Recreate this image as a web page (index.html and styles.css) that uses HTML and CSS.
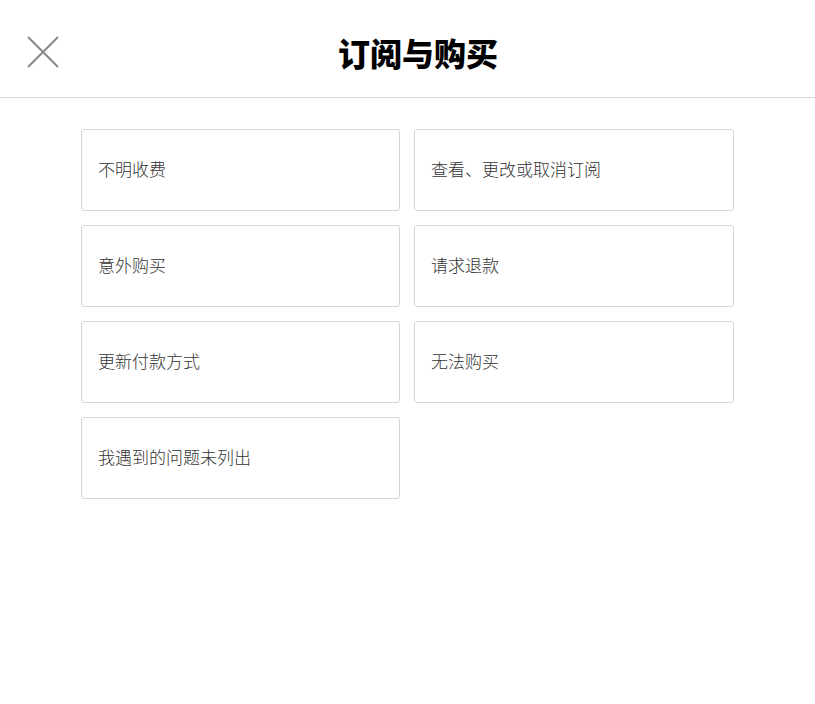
FILE: index.html
```html
<!DOCTYPE html>
<html lang="zh-CN">
<head>
<meta charset="utf-8">
<title>订阅与购买</title>
<link rel="stylesheet" href="styles.css">
</head>
<body>
<header class="header">
  <button class="close" aria-label="关闭">
    <svg width="32" height="32" viewBox="0 0 32 32"><path d="M1 1 L31 31 M31 1 L1 31" stroke="#8a8a8a" stroke-width="2" fill="none"/></svg>
  </button>
  <h1 class="title">订阅与购买</h1>
</header>
<main class="grid">
  <div class="card">不明收费</div>
  <div class="card">查看、更改或取消订阅</div>
  <div class="card">意外购买</div>
  <div class="card">请求退款</div>
  <div class="card">更新付款方式</div>
  <div class="card">无法购买</div>
  <div class="card">我遇到的问题未列出</div>
</main>
</body>
</html>
```

FILE: styles.css
```css
html, body {
  margin: 0;
  padding: 0;
  background: #fff;
  font-family: "Noto Sans CJK SC", "Noto Sans", sans-serif;
}
.header {
  position: relative;
  height: 97px;
  border-bottom: 1px solid #d6d6d6;
  display: flex;
  align-items: center;
  justify-content: center;
}
.close {
  position: absolute;
  left: 27px;
  top: 36px;
  width: 32px;
  height: 32px;
  padding: 0;
  border: 0;
  background: none;
  cursor: pointer;
}
.close svg { display: block; }
.title {
  margin: 0 0 0 21px;
  font-size: 32px;
  font-weight: 900;
  color: #000;
  line-height: 1;
  position: relative;
  top: 3px;
}
.grid {
  width: 653px;
  margin: 31px auto 0;
  display: grid;
  grid-template-columns: 319px 320px;
  gap: 14px;
}
.card {
  height: 82px;
  box-sizing: border-box;
  border: 1px solid #d6d6d6;
  border-radius: 3px;
  padding: 0 16px 4px;
  display: flex;
  align-items: center;
  font-size: 17px;
  font-weight: 300;
  color: #333;
}
```
